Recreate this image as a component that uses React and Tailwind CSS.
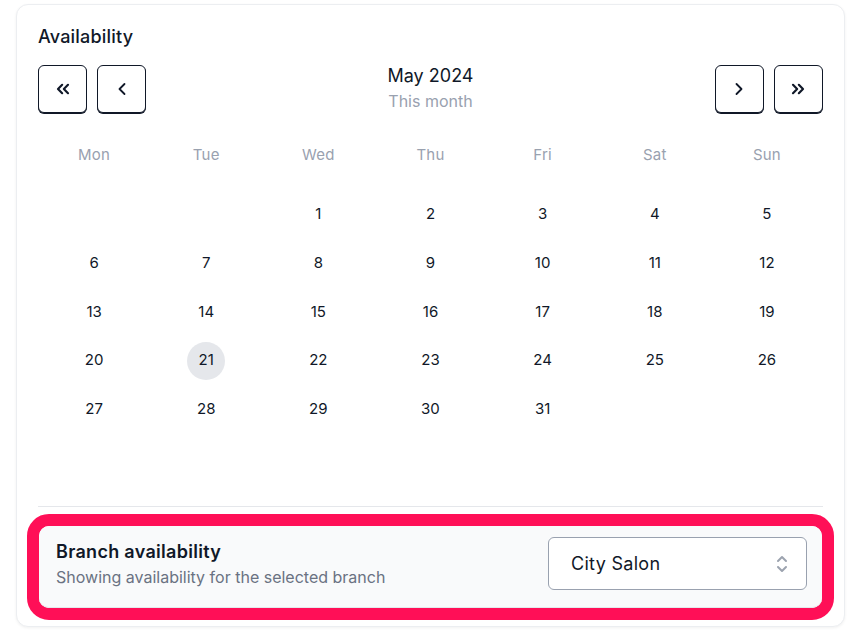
import React from "react";

const font = { fontFamily: "Inter, 'Noto Sans', sans-serif" };

function NavBtn({ children }) {
  return (
    <button className="w-[49px] h-[48px] flex items-center justify-center rounded-md border border-gray-900 bg-white shadow-[0_1px_0_0_#111827] text-gray-900">
      {children}
    </button>
  );
}

const Chev = ({ d, w = 2.2 }) => (
  <svg width="20" height="20" viewBox="0 0 24 24" fill="none" stroke="currentColor" strokeWidth={w} strokeLinecap="round" strokeLinejoin="round">
    <path d={d} />
  </svg>
);

export default function App() {
  const days = ["Mon", "Tue", "Wed", "Thu", "Fri", "Sat", "Sun"];
  const cells = [null, null];
  for (let i = 1; i <= 31; i++) cells.push(i);
  while (cells.length < 35) cells.push(null);
  const rows = [];
  for (let i = 0; i < cells.length; i += 7) rows.push(cells.slice(i, i + 7));

  return (
    <div className="w-[862px] h-[643px] bg-white pt-[4px] pl-[16px]" style={font}>
      <div className="w-[829px] h-[623px] rounded-xl border border-[#eceef1] shadow-[0_1px_3px_rgba(0,0,0,0.06)] bg-white px-[21px] pt-[19px] flex flex-col">
        <div className="text-[18px] leading-[26px] font-medium tracking-[0.2px] text-gray-900">Availability</div>
        <div className="mt-[15px] flex items-start justify-between">
          <div className="flex gap-[10px]">
            <NavBtn><Chev w={2.6} d="M11 17l-5-5 5-5M18 17l-5-5 5-5" /></NavBtn>
            <NavBtn><Chev d="M15 18l-6-6 6-6" /></NavBtn>
          </div>
          <div className="flex flex-col items-center">
            <div className="text-[18px] leading-[22px] text-gray-900">May 2024</div>
            <div className="text-[16px] leading-[22px] mt-[3px] text-gray-400">This month</div>
          </div>
          <div className="flex gap-[10px]">
            <NavBtn><Chev d="M9 18l6-6-6-6" /></NavBtn>
            <NavBtn><Chev w={2.6} d="M13 17l5-5-5-5M6 17l5-5-5-5" /></NavBtn>
          </div>
        </div>
        <div className="mt-[22px] grid grid-cols-7 h-[40px] items-center">
          {days.map((d) => (
            <div key={d} className="text-center text-[15px] tracking-[0.2px] text-gray-400">{d}</div>
          ))}
        </div>
        <div className="mt-[15px] flex flex-col">
          {rows.map((r, ri) => (
            <div key={ri} className="grid grid-cols-7 h-[48.75px] items-center">
              {r.map((c, ci) => (
                <div key={ci} className="flex justify-center">
                  {c && (
                    <div className={`w-[38px] h-[38px] rounded-full flex items-center justify-center text-[15px] text-gray-900 ${c === 21 ? "bg-gray-200" : ""}`}>
                      {c}
                    </div>
                  )}
                </div>
              ))}
            </div>
          ))}
        </div>
        <div className="mt-auto h-px bg-gray-200"></div>
        <div className="mt-[7px] mb-[6px] mx-[-11px] rounded-[22px] border-[12px] border-[#ff0f57]">
          <div className="h-[82px] rounded-[10px] bg-gray-50 border-b border-gray-200 flex items-start justify-between pl-[17px] pr-[15px]">
            <div className="flex flex-col pt-[14px]">
              <div className="text-[18px] leading-[24px] font-semibold tracking-[0.3px] text-gray-900">Branch availability</div>
              <div className="text-[16px] leading-[22px] text-gray-500 mt-[2px]">Showing availability for the selected branch</div>
            </div>
            <div className="mt-[11px] w-[259px] h-[53px] rounded-md border border-gray-400 bg-white flex items-center justify-between pl-[22px] pr-[16px]">
              <span className="text-[18px] tracking-[0.3px] text-gray-900">City Salon</span>
              <svg width="16" height="22" viewBox="0 0 16 22" fill="none" stroke="#9ca3af" strokeWidth="2" strokeLinecap="round" strokeLinejoin="round">
                <path d="M4 8l4-4 4 4M4 14l4 4 4-4" />
              </svg>
            </div>
          </div>
        </div>
      </div>
    </div>
  );
}
